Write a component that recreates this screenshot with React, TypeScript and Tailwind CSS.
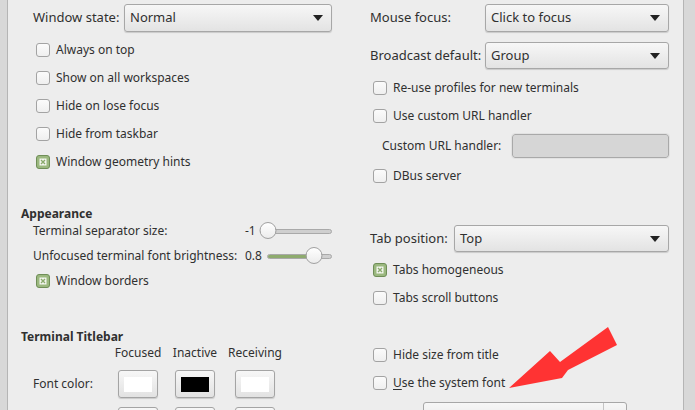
import React from 'react';

function Select({ value, className = '' }: { value: string; className?: string }) {
  return (
    <div
      className={`flex items-center justify-between rounded-[3px] border border-[#a7a7a7] bg-linear-to-b from-[#f7f7f7] to-[#e3e3e3] pl-[5px] pr-[8px] shadow-[0_1px_1px_rgba(0,0,0,0.15)] ${className}`}
    >
      <span className="text-[13px]">{value}</span>
      <svg width="10" height="6" viewBox="0 0 10 6">
        <path d="M0 0h10L5 6z" fill="#222" />
      </svg>
    </div>
  );
}

function Check({ label, checked = false, underline }: { label: string; checked?: boolean; underline?: boolean }) {
  return (
    <div className="flex h-[28px] items-center gap-[6px] pl-[3px]">
      {checked ? (
        <svg width="14" height="14" viewBox="0 0 14 14">
          <rect x="0.5" y="0.5" width="13" height="13" rx="2.5" fill="#9bb87f" stroke="#6f8e57" />
          <rect x="3.5" y="3.5" width="7" height="7" fill="#f4f6f0" />
          <path d="M5 5l4 4M9 5l-4 4" stroke="#8aaa6c" strokeWidth="1.4" />
        </svg>
      ) : (
        <span className="h-[14px] w-[14px] rounded-[3px] border border-[#a3a3a3] bg-linear-to-b from-[#fbfbfb] to-[#efefef]" />
      )}
      <span>
        {underline ? (
          <>
            <span className="underline underline-offset-2">{label[0]}</span>
            {label.slice(1)}
          </>
        ) : (
          label
        )}
      </span>
    </div>
  );
}

function Slider({ pct, green }: { pct: number; green?: boolean }) {
  return (
    <div className="relative flex h-[18px] flex-1 items-center">
      <div className="relative h-[5px] w-full overflow-hidden rounded-full border border-[#a9a9a9] bg-[#cfcfcf]">
        {green && <div className="h-full bg-[#8eab6e]" style={{ width: `${pct}%` }} />}
      </div>
      <div
        className="absolute top-[0px] h-[17px] w-[17px] -translate-x-1/2 rounded-full border border-[#a0a0a0] bg-linear-to-b from-white to-[#ececec]"
        style={{ left: `${pct}%`, marginLeft: pct === 0 ? '8px' : '0' }}
      />
    </div>
  );
}

function ColorBtn({ color }: { color: string }) {
  return (
    <div className="flex h-[28px] w-[40px] items-center justify-center rounded-[3px] border border-[#a4a4a4] bg-linear-to-b from-[#f7f7f7] to-[#e2e2e2] shadow-[0_1px_1px_rgba(0,0,0,0.15)]">
      <div className="h-[15px] w-[28px]" style={{ background: color }} />
    </div>
  );
}

export default function App() {
  return (
    <div
      className="flex h-[410px] w-[695px] overflow-hidden bg-[#d8d8d8] text-[12px] text-[#303030]"
      style={{ fontFamily: '"Noto Sans", "Open Sans", sans-serif' }}
    >
      <div className="w-[8px] shrink-0 border-r border-[#b5b5b5]" />
      <div className="relative w-[676px] shrink-0 border-r border-[#b5b5b5] bg-[#ededed]">
        {/* top section */}
        <div className="grid h-[200px] grid-cols-[338px_1fr]">
          <div className="pl-[25px] pr-[14px] pt-[4px]">
            <div className="flex h-[28px] items-center">
              <span className="w-[91px] text-[13px]">Window state:</span>
              <Select value="Normal" className="h-[28px] flex-1" />
            </div>
            <div className="mt-[4px]">
              <Check label="Always on top" />
              <Check label="Show on all workspaces" />
              <Check label="Hide on lose focus" />
              <Check label="Hide from taskbar" />
              <Check label="Window geometry hints" checked />
            </div>
          </div>
          <div className="pl-[24px] pr-[14px] pt-[4px]">
            <div className="flex h-[28px] items-center">
              <span className="w-[115px] text-[13px]">Mouse focus:</span>
              <Select value="Click to focus" className="h-[28px] flex-1" />
            </div>
            <div className="mt-[10px] flex h-[27px] items-center">
              <span className="w-[115px] text-[13px]">Broadcast default:</span>
              <Select value="Group" className="h-[27px] flex-1" />
            </div>
            <div className="mt-[5px]">
              <Check label="Re-use profiles for new terminals" />
              <Check label="Use custom URL handler" />
            </div>
            <div className="mt-[4px] flex h-[24px] items-center pl-[12px]">
              <span className="w-[130px]">Custom URL handler:</span>
              <div className="h-[24px] flex-1 rounded-[3px] border border-[#a9a9a9] bg-[#d6d6d6] outline outline-1 outline-[#e2e2e2]" />
            </div>
            <div className="mt-[4px]">
              <Check label="DBus server" />
            </div>
          </div>
        </div>

        {/* appearance section */}
        <div className="grid h-[120px] grid-cols-[338px_1fr]">
          <div className="pl-[13px] pr-[14px]">
            <div className="mt-[6px] flex h-[16px] items-center font-bold">Appearance</div>
            <div className="flex h-[18px] items-center pl-[12px]">
              <span className="w-[212px]">Terminal separator size:</span>
              <span>-1</span>
              <div className="ml-[4px] flex flex-1">
                <Slider pct={0} />
              </div>
            </div>
            <div className="mt-[6px] flex h-[20px] items-center pl-[12px]">
              <span className="w-[212px] whitespace-nowrap">Unfocused terminal font brightness:</span>
              <span>0.8</span>
              <div className="ml-[5px] flex flex-1">
                <Slider pct={73} green />
              </div>
            </div>
            <div className="mt-[1px] pl-[12px]">
              <Check label="Window borders" checked />
            </div>
          </div>
          <div className="pl-[24px] pr-[14px]">
            <div className="mt-[25px] flex h-[27px] items-center">
              <span className="w-[84px] text-[13px]">Tab position:</span>
              <Select value="Top" className="h-[27px] flex-1" />
            </div>
            <div className="mt-[4px]">
              <Check label="Tabs homogeneous" checked />
              <Check label="Tabs scroll buttons" />
            </div>
          </div>
        </div>

        {/* titlebar section */}
        <div className="grid grid-cols-[338px_1fr]">
          <div className="pl-[13px]">
            <div className="mt-[9px] flex h-[16px] items-center font-bold">Terminal Titlebar</div>
            <div className="flex h-[16px] items-center pl-[97px]">
              <span className="flex w-[40px] justify-center whitespace-nowrap">Focused</span>
              <span className="ml-[17px] flex w-[40px] justify-center whitespace-nowrap">Inactive</span>
              <span className="ml-[20px] flex w-[40px] justify-center whitespace-nowrap">Receiving</span>
            </div>
            <div className="mt-[9px] flex h-[28px] items-center pl-[12px]">
              <span className="w-[85px]">Font color:</span>
              <ColorBtn color="#ffffff" />
              <div className="ml-[17px]">
                <ColorBtn color="#000000" />
              </div>
              <div className="ml-[20px]">
                <ColorBtn color="#ffffff" />
              </div>
            </div>
            <div className="mt-[9px] flex h-[28px] items-center pl-[12px]">
              <span className="w-[85px]">Background:</span>
              <ColorBtn color="#c80003" />
              <div className="ml-[17px]">
                <ColorBtn color="#0076c9" />
              </div>
              <div className="ml-[20px]">
                <ColorBtn color="#0076c9" />
              </div>
            </div>
          </div>
          <div className="pl-[24px] pr-[14px]">
            <div className="mt-[21px]">
              <Check label="Hide size from title" />
              <Check label="Use the system font" underline />
            </div>
            <div className="ml-[53px] mt-[5px] flex h-[30px] w-[204px] items-center rounded-[3px] border border-[#a7a7a7] bg-linear-to-b from-[#f7f7f7] to-[#e3e3e3]">
              <span className="flex-1 text-center">Monospace Regular 10</span>
              <span className="h-full w-[23px] border-l border-[#c4c4c4]" />
            </div>
          </div>
        </div>

        {/* red annotation arrow */}
        <svg className="pointer-events-none absolute left-[-9px] top-0" width="695" height="410" viewBox="0 0 695 410">
          <polygon
            points="510,388 551,351 561,362 609,327 618,345 569,370 563,378"
            fill="#ff3333"
          />
        </svg>
      </div>
    </div>
  );
}
